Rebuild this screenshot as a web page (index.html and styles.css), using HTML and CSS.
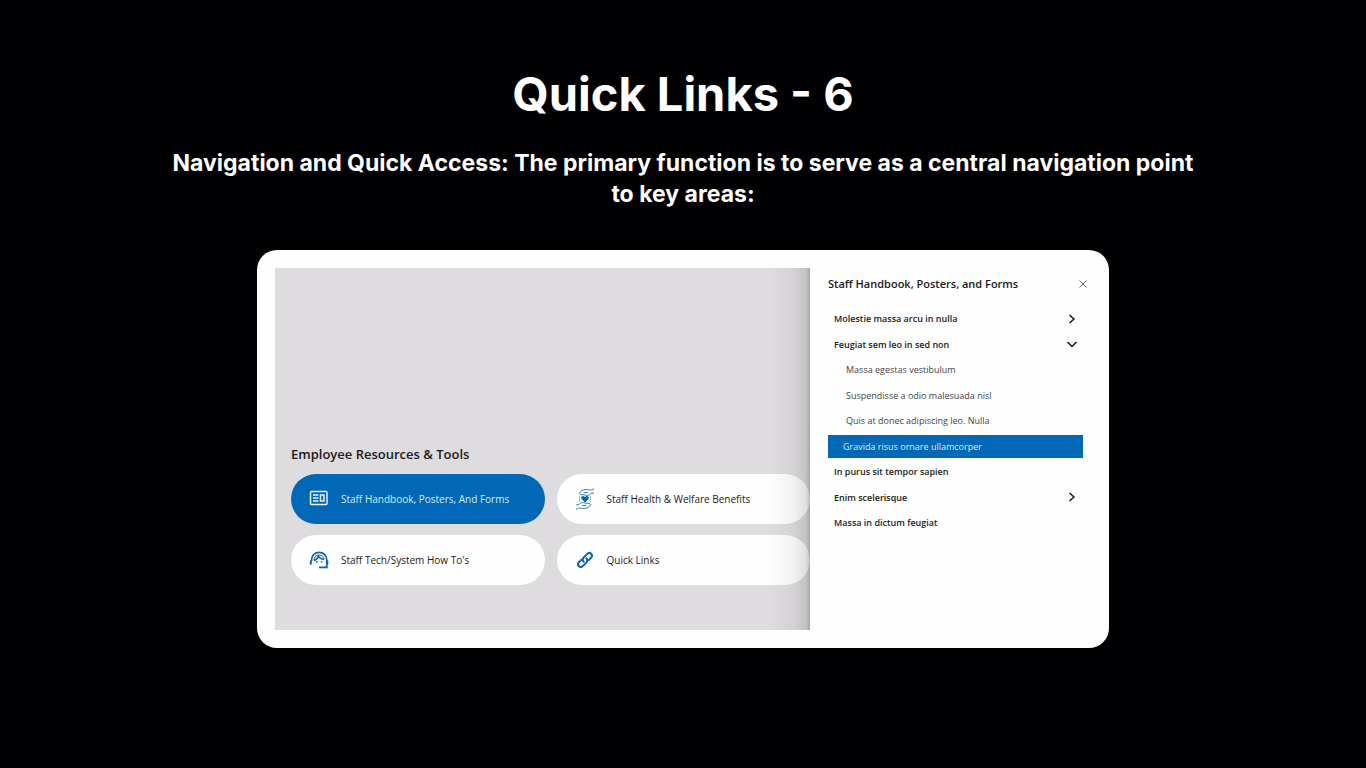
FILE: index.html
```html
<!DOCTYPE html>
<html lang="en">

<head>
    <meta charset="UTF-8">
    <meta name="viewport" content="width=device-width, initial-scale=1.0">
    <title>Quick Links - 6</title>
    <link rel="stylesheet" href="styles.css">
</head>

<body>
    <header class="intro">
        <h1>Quick Links - 6</h1>
        <p>Navigation and Quick Access: The primary function is to serve as a central navigation point to key areas:</p>
    </header>

    <main class="card">
        <section class="stage">
            <h2>Employee Resources &amp; Tools</h2>
            <div class="tiles">
                <button class="tile active" type="button">
                    <svg class="icon" viewBox="0 0 20 22" fill="none" stroke="currentColor" stroke-width="1.5">
                        <rect x="1.5" y="3.5" width="16.500" height="13" rx="1" />
                        <path d="M4 7h5.500M4 10h5.500M4 13h5.500" />
                        <rect x="11.500" y="7" width="3.5" height="6" />
                    </svg>
                    Staff Handbook, Posters, And Forms
                </button>
                <button class="tile" type="button">
                    <svg class="icon" viewBox="0 0 20 22" fill="none" stroke="currentColor" stroke-width="0.8">
                        <path d="M4 6C5 3 8 1.500 11 1.500c2 0 4 .8 5.500.3l2.500-1M19 5l-3 .5c-1 2-4 2.200-6 1.500L5 6.500M9 4.500h4" />
                        <path d="M16 16c-1 3-4 4.500-7 4.500-2 0-4-.8-5.500-.3L1 21.200M1 17l3-.5c1-2 4-2.200 6-1.500l5 .7M11 17.500H7" />
                        <path d="M4.500 8.500v5M15.500 8.500v5" stroke-dasharray="1.200 .9" />
                        <path d="M10 14.500 6.500 11C5 9 8 6.800 10 9c2-2.200 5 0 3.500 2z" fill="currentColor" stroke="none" />
                    </svg>
                    Staff Health &amp; Welfare Benefits
                </button>
                <button class="tile" type="button">
                    <svg class="icon" viewBox="0 0 20 22" fill="none" stroke="currentColor" stroke-width="1.700">
                        <path d="M2.500 12C2.500 6.500 5.500 3.300 10 3.300S17.800 6.500 17.800 11v7.300H10" />
                        <path d="M1.800 11.500v4M18.300 11.500v4" stroke-width="2" />
                        <path d="M5 11.500C7.500 10.700 8.800 9 9.300 7.200c1.300 2 3 3 5.700 3.300" stroke-width="1.500" />
                        <path d="M5 11.500C5 8 7 6 10 6s4.700 2 5 4.500" stroke-width="1" />
                        <path d="M7 12.800h1.500M11.800 12.800h1.500" stroke-width="1.500" />
                    </svg>
                    Staff Tech/System How To's
                </button>
                <button class="tile" type="button">
                    <svg class="icon" viewBox="0 0 20 20" fill="none" stroke="currentColor" stroke-width="2" stroke-linecap="round">
                        <path d="M8.700 11.800C7.300 10.400 7.300 8.800 8.700 7.400L12 4.100c3-3 6.700.700 4 3.700l-2.200 2.300" />
                        <path d="M11.300 8.200c1.400 1.400 1.400 3 0 4.400L8 15.900c-3 3-6.700-.700-4-3.700l2.200-2.300" />
                    </svg>
                    Quick Links
                </button>
            </div>
        </section>

        <aside class="drawer">
            <div class="drawer-header">
                <h2>Staff Handbook, Posters, and Forms</h2>
                <button class="close" type="button" aria-label="Close">
                    <svg viewBox="0 0 8 8" fill="none" stroke="currentColor" stroke-width="0.8">
                        <path d="M.5.5l7 7M7.500.5l-7 7" />
                    </svg>
                </button>
            </div>
            <nav>
                <ul class="menu">
                    <li>
                        <button class="item" type="button">
                            Molestie massa arcu in nulla
                            <svg class="chevron" viewBox="0 0 12 12"><path d="M3.500 2l4.500 4-4.500 4" /></svg>
                        </button>
                    </li>
                    <li>
                        <button class="item" type="button" aria-expanded="true">
                            Feugiat sem leo in sed non
                            <svg class="chevron" viewBox="0 0 12 12"><path d="M1.500 4L6 8.500 10.500 4" /></svg>
                        </button>
                    </li>
                    <li><a class="item sub" href="#">Massa egestas vestibulum</a></li>
                    <li><a class="item sub" href="#">Suspendisse a odio malesuada nisl</a></li>
                    <li><a class="item sub" href="#">Quis at donec adipiscing leo. Nulla</a></li>
                    <li><a class="item sub selected" href="#">Gravida risus ornare ullamcorper</a></li>
                    <li><a class="item" href="#">In purus sit tempor sapien</a></li>
                    <li>
                        <button class="item" type="button">
                            Enim scelerisque
                            <svg class="chevron" viewBox="0 0 12 12"><path d="M3.500 2l4.500 4-4.500 4" /></svg>
                        </button>
                    </li>
                    <li><a class="item" href="#">Massa in dictum feugiat</a></li>
                </ul>
            </nav>
        </aside>
    </main>
</body>

</html>
```
FILE: styles.css
```css
* {
    box-sizing: border-box;
}

body {
    margin: 0;
    padding: 64px 24px;
    background: #010002;
    color: white;
    font-family: "Open Sans", "Noto Sans", sans-serif;
}

h1,
h2,
p,
ul {
    margin: 0;
    padding: 0;
}

button {
    border: none;
    font-family: inherit;
    cursor: pointer;
}

/* Intro */
.intro {
    max-width: 1040px;
    margin: 0 auto 40px;
    text-align: center;
    font-family: Inter, sans-serif;
}

.intro h1 {
    margin-bottom: 24px;
    font-size: 47px;
    line-height: 60px;
    font-weight: 700;
}

.intro p {
    font-size: 23px;
    line-height: 31px;
    font-weight: 700;
}

/* Card */
.card {
    display: flex;
    max-width: 852px;
    min-height: 398px;
    margin: 0 auto;
    padding: 18px;
    border-radius: 20px;
    background: #fefefe;
    color: #1b1a1c;
}

.stage {
    position: relative;
    flex: 1;
    display: flex;
    flex-direction: column;
    justify-content: flex-end;
    padding: 0 0 45px 16px;
    background: #dedcdf;
}

/* Shadow thrown by the drawer */
.stage::after {
    content: "";
    position: absolute;
    top: 0;
    right: 0;
    bottom: 0;
    width: 40px;
    background: linear-gradient(to right, rgba(40, 36, 44, 0), rgba(40, 36, 44, 0.06) 60%, rgba(40, 36, 44, 0.14) 90%, rgba(40, 36, 44, 0.3));
    pointer-events: none;
}

.stage h2 {
    margin-bottom: 10px;
    font-size: 13px;
    line-height: 20px;
    font-weight: 600;
}

.tiles {
    display: grid;
    grid-template-columns: 1fr 1fr;
    gap: 11px 12px;
}

.tile {
    display: flex;
    align-items: center;
    gap: 12px;
    height: 50px;
    padding: 0 18px;
    border-radius: 25px;
    background: #fefefe;
    color: #1b1a1c;
    font-size: 10px;
    text-align: left;
}

.tile.active {
    background: #0068b6;
    color: #d9ecfa;
}

.icon {
    width: 20px;
    height: 22px;
    color: #0b63ad;
}

.active .icon {
    color: #e6f3fc;
}

/* Drawer */
.drawer {
    width: 281px;
    padding: 6px 0 0 18px;
}

.drawer-header {
    display: flex;
    align-items: center;
    justify-content: space-between;
    margin-bottom: 13px;
}

.drawer-header h2 {
    font-size: 11px;
    line-height: 20px;
    font-weight: 600;
}

.close {
    display: flex;
    padding: 4px;
    background: none;
    color: #4a494b;
}

.close svg {
    width: 8px;
    height: 8px;
}

.menu {
    display: flex;
    flex-direction: column;
    justify-content: space-between;
    min-height: 227px;
    padding-right: 8px;
    list-style: none;
}

.item {
    display: flex;
    align-items: center;
    justify-content: space-between;
    width: 100%;
    height: 23px;
    padding: 0 5px 0 6px;
    background: none;
    color: #222;
    font-size: 9px;
    font-weight: 600;
    text-decoration: none;
}

.sub {
    padding-left: 18px;
    color: #444;
    font-weight: 400;
}

.selected {
    padding-left: 15px;
    background: #0068b6;
    color: #d9ecfa;
}

.chevron {
    width: 12px;
    height: 12px;
    fill: none;
    stroke: #111;
    stroke-width: 1.4;
}
```
